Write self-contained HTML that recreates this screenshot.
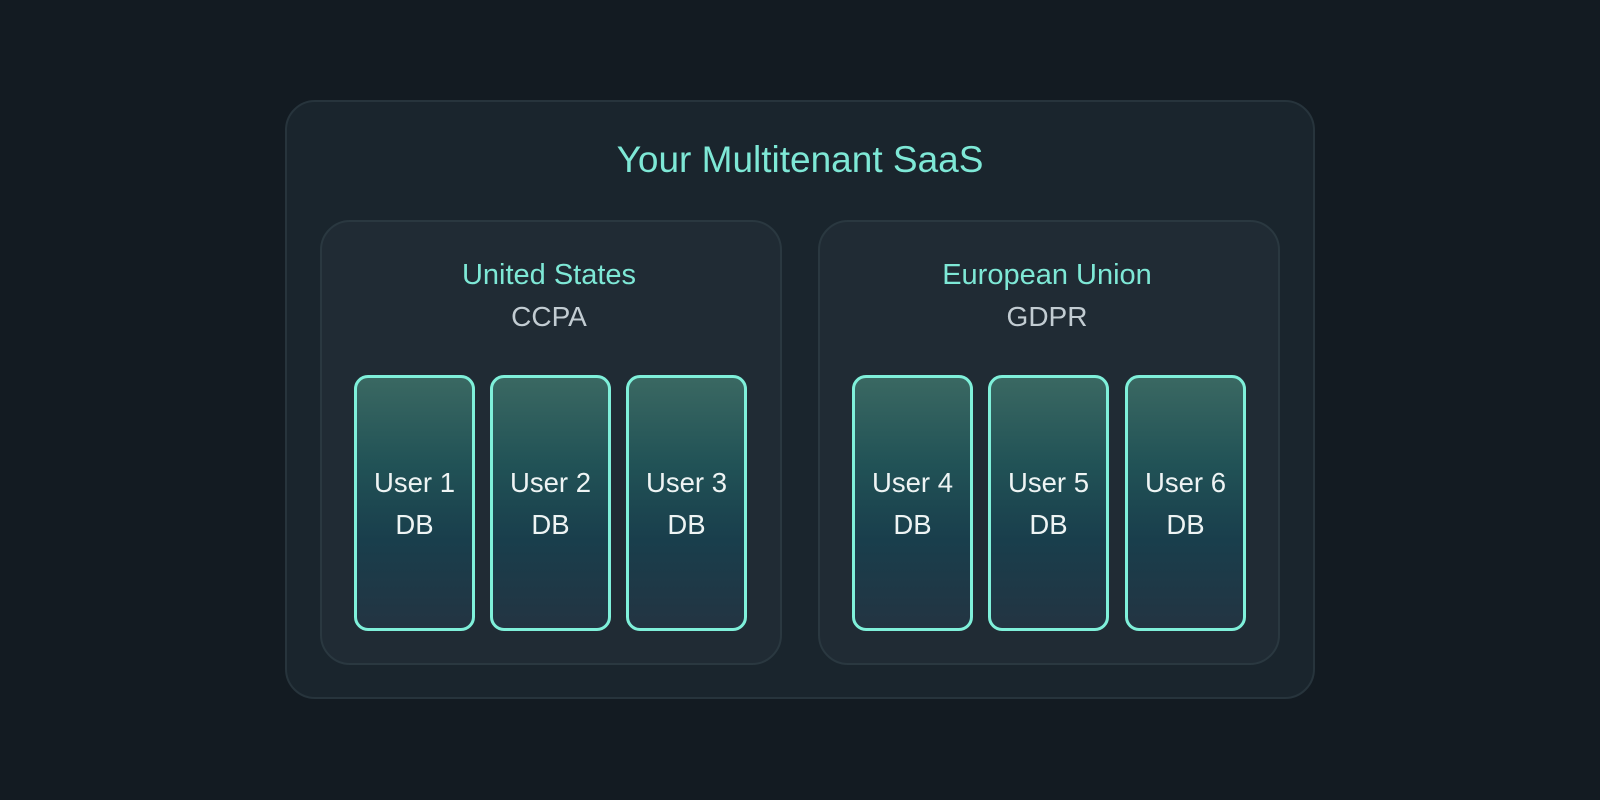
<!DOCTYPE html><html><head><style>
body{margin:0;width:1600px;height:800px;background:#131b22;font-family:"Liberation Sans",sans-serif;position:relative;overflow:hidden}
.outer{position:absolute;left:285px;top:100px;width:1030px;height:599px;background:#1a252d;border:2px solid #27343c;border-radius:30px;box-sizing:border-box}
.title{position:absolute;left:286px;width:1028px;top:139px;text-align:center;color:#7ee8d6;font-size:37px}
.panel{position:absolute;top:220px;width:462px;height:445px;background:#202b34;border:2px solid #2a3840;border-radius:30px;box-sizing:border-box}
.rt{position:absolute;top:259px;width:462px;text-align:center;color:#7ee8d6;font-size:29px}
.rs{position:absolute;top:301px;width:462px;text-align:center;color:#c2ccd2;font-size:28px}
.card{position:absolute;top:375px;width:121px;height:256px;border:3px solid #7ff0da;border-radius:14px;box-sizing:border-box;background:linear-gradient(180deg,#3a6862 0%,#215256 35%,#193e4c 65%,#233442 100%);color:#eef4f4;font-size:27.5px;text-align:center;line-height:42px;padding-top:84px}
</style></head><body>
<div class="outer"></div>
<div class="title">Your Multitenant SaaS</div>
<div class="panel" style="left:320px"></div>
<div class="panel" style="left:818px"></div>
<div class="rt" style="left:318px">United States</div>
<div class="rs" style="left:318px">CCPA</div>
<div class="rt" style="left:816px">European Union</div>
<div class="rs" style="left:816px">GDPR</div>
<div class="card" style="left:354px">User 1<br>DB</div>
<div class="card" style="left:490px">User 2<br>DB</div>
<div class="card" style="left:626px">User 3<br>DB</div>
<div class="card" style="left:852px">User 4<br>DB</div>
<div class="card" style="left:988px">User 5<br>DB</div>
<div class="card" style="left:1125px">User 6<br>DB</div>
</body></html>
